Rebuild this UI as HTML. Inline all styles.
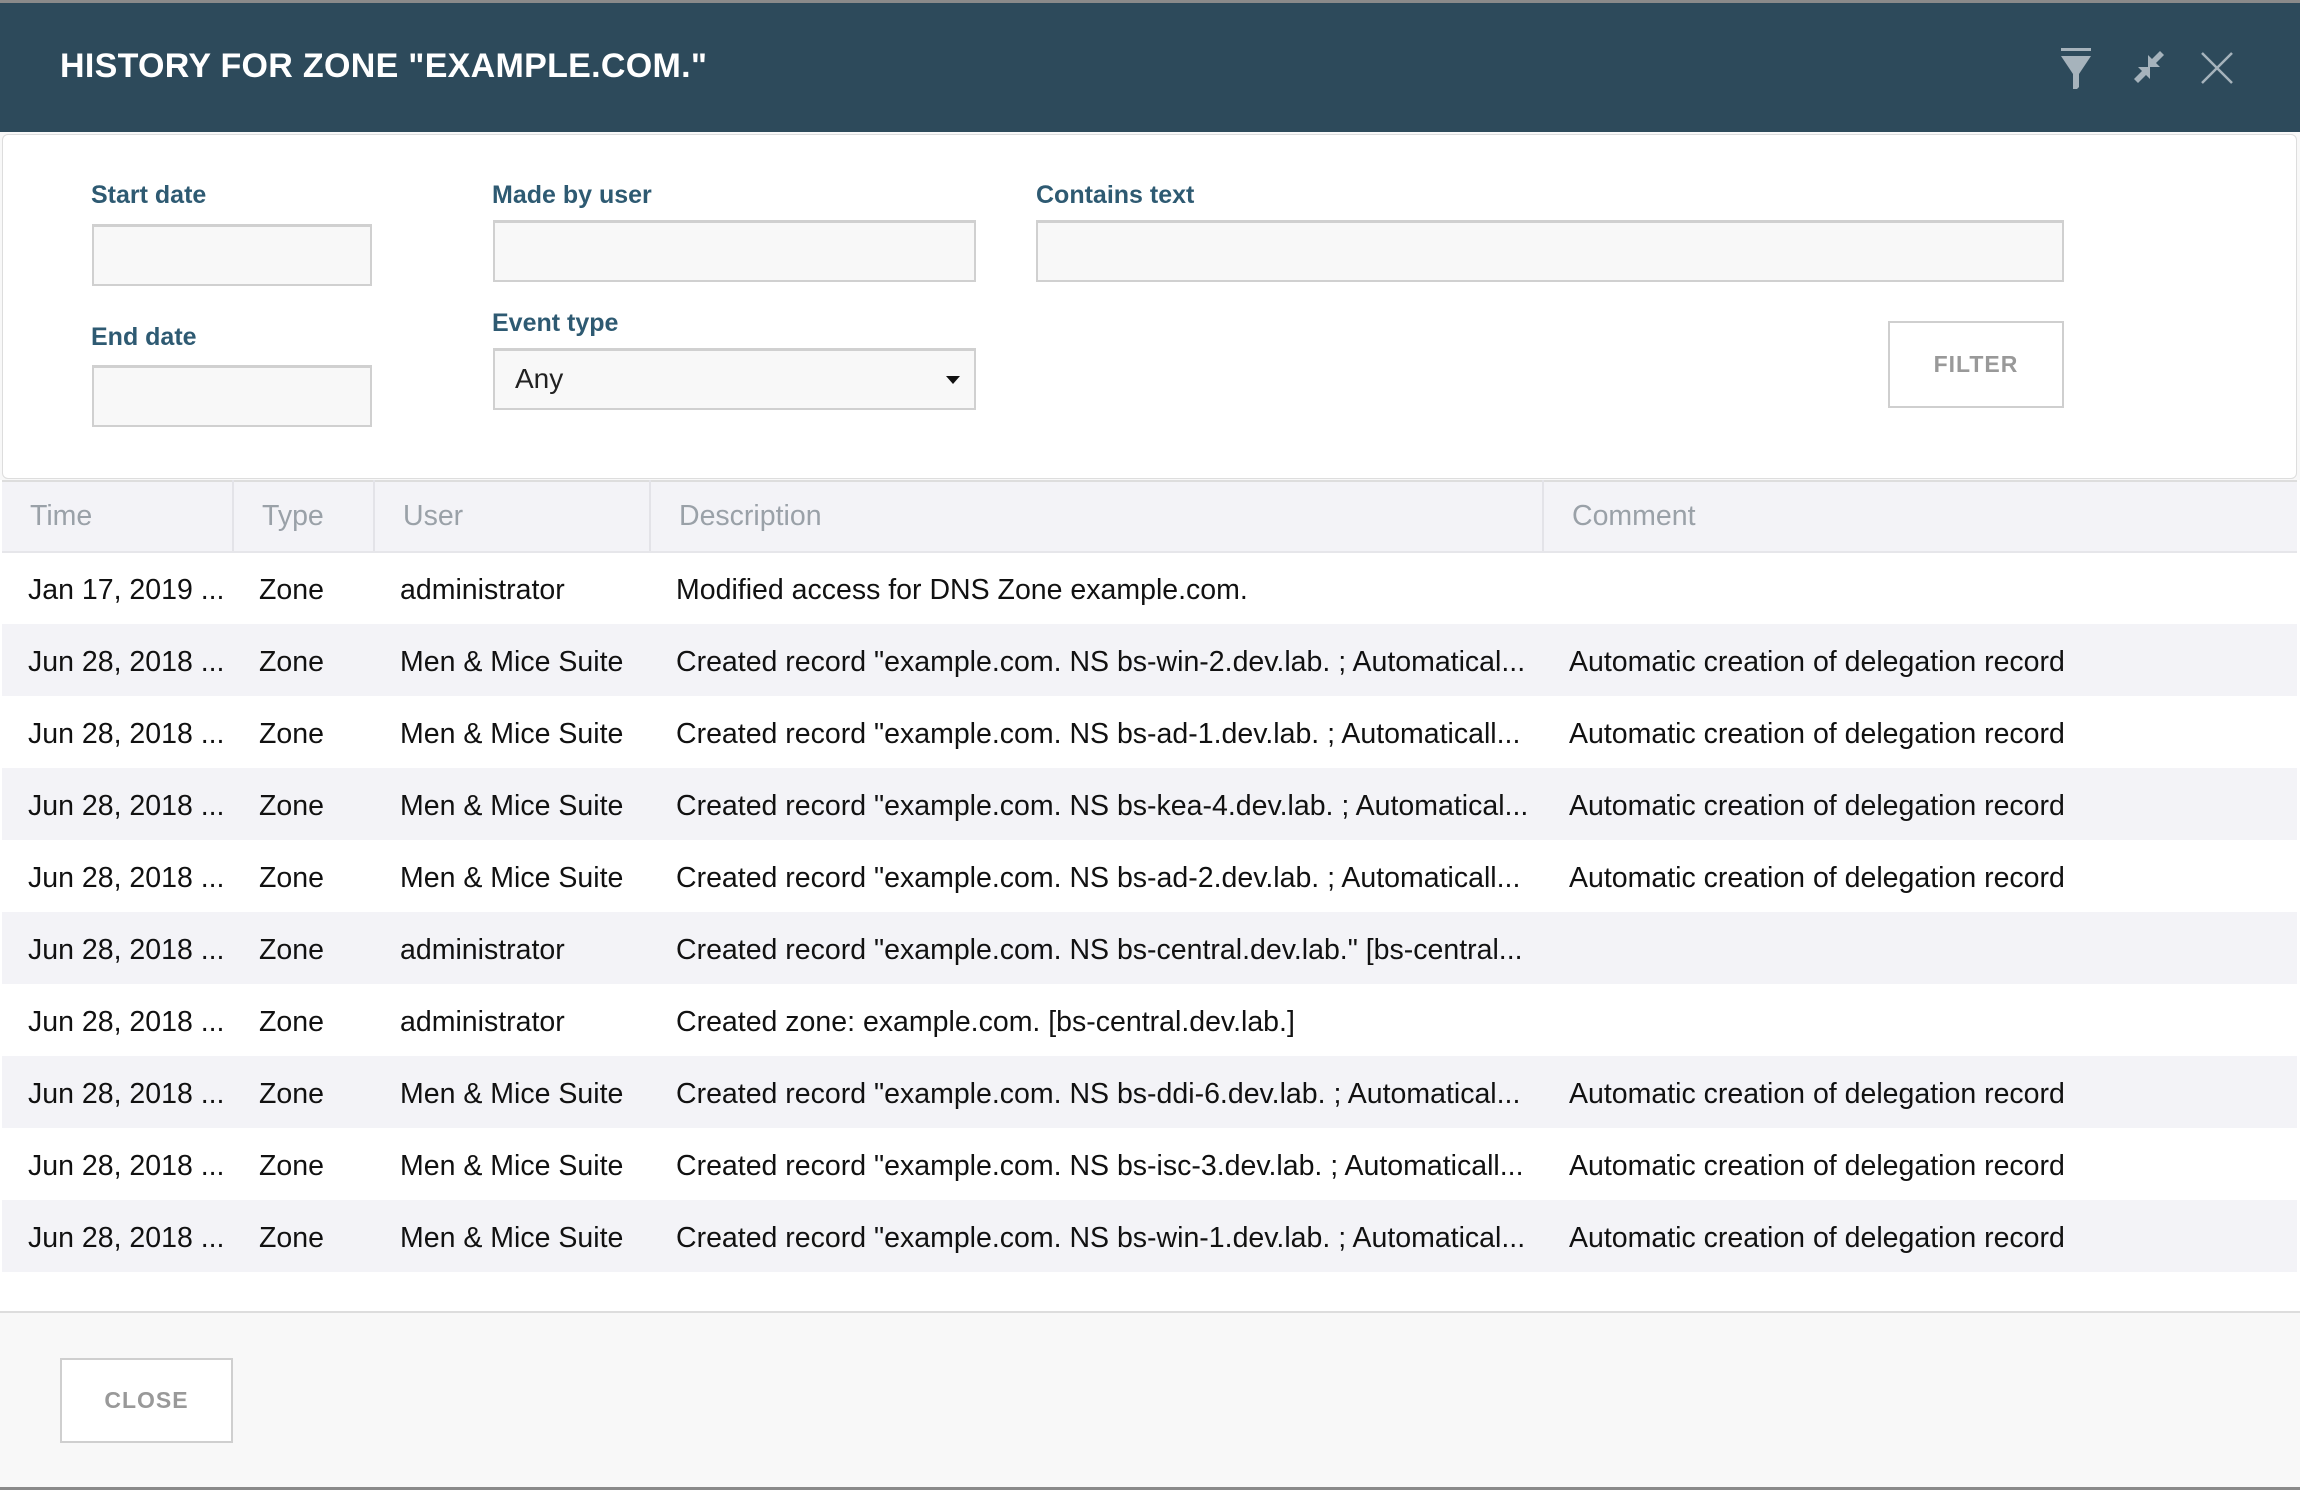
<!DOCTYPE html>
<html><head><meta charset="utf-8"><style>
*{box-sizing:border-box;margin:0;padding:0}
body{width:2300px;height:1490px;overflow:hidden;background:#f8f8f8;font-family:"Liberation Sans",Arial,sans-serif;position:relative}
.top{position:absolute;left:0;top:0;width:2300px;height:3px;background:#8a8a8a}
.hdr{position:absolute;left:0;top:3px;width:2300px;height:129px;background:#2d4a5b}
.title{position:absolute;left:60px;top:44px;color:#fff;font-size:34px;font-weight:bold;letter-spacing:0.3px}
.panel{position:absolute;left:2px;top:134px;width:2295px;height:345px;background:#fff;border:1px solid #ddd;border-radius:6px}
.lbl{position:absolute;color:#2e5a72;font-size:25px;font-weight:bold}
.inp{position:absolute;background:#f8f8f8;border:2px solid #d0d0d0;border-top-width:3px}
.btn{position:absolute;background:#fff;border:2px solid #cfcfcf;color:#999;font-size:23px;font-weight:bold;display:flex;align-items:center;justify-content:center;letter-spacing:1px}
table{position:absolute;left:2px;top:480px;width:2295px;border-collapse:collapse;font-size:28.5px;background:#fff}
th{height:71px;background:#f3f3f7;color:#9aa1a8;font-weight:normal;text-align:left;padding-left:28px;border-right:2px solid #e3e3e8;border-top:2px solid #ddd;border-bottom:2px solid #e6e6ea}
td{height:72px;padding-left:26px;padding-top:4px;color:#111;white-space:nowrap}
tr:nth-child(odd) td{background:#f3f3f7}
.tblwrap{position:absolute;left:0;top:480px;width:2300px;height:833px;background:#fff;border-bottom:2px solid #ddd}
</style></head><body>
<div class="top"></div>
<div class="hdr">
<div class="title">HISTORY FOR ZONE "EXAMPLE.COM."</div>
<svg style="position:absolute;left:2058px;top:44px" width="36" height="42" viewBox="0 0 36 42"><rect x="3" y="1" width="30" height="3" fill="#a6b3bc"/><path d="M3 9 H33 L21 27 V40 L15 46 V27 Z" fill="#a6b3bc"/></svg>
<svg style="position:absolute;left:2130px;top:45px" width="38" height="38" viewBox="0 0 38 38"><path d="M30 3 L34 7 L26 15 L30 19 H18 V7 L22 11 Z" fill="#a6b3bc"/><path d="M8 35 L4 31 L12 23 L8 19 H20 V31 L16 27 Z" fill="#a6b3bc"/></svg>
<svg style="position:absolute;left:2200px;top:48px" width="34" height="34" viewBox="0 0 34 34"><path d="M2 2 L32 32 M32 2 L2 32" stroke="#a6b3bc" stroke-width="2.5"/></svg>
</div>
<div class="panel"></div>
<div class="lbl" style="left:91px;top:181px">Start date</div>
<div class="inp" style="left:92px;top:224px;width:280px;height:62px"></div>
<div class="lbl" style="left:91px;top:323px">End date</div>
<div class="inp" style="left:92px;top:365px;width:280px;height:62px"></div>
<div class="lbl" style="left:492px;top:181px">Made by user</div>
<div class="inp" style="left:493px;top:220px;width:483px;height:62px"></div>
<div class="lbl" style="left:492px;top:309px">Event type</div>
<div class="inp" style="left:493px;top:348px;width:483px;height:62px;font-size:28px;color:#222;padding:12px 0 0 20px">Any<span style="position:absolute;right:14px;top:25px;width:0;height:0;border-left:7px solid transparent;border-right:7px solid transparent;border-top:8px solid #111"></span></div>
<div class="lbl" style="left:1036px;top:181px">Contains text</div>
<div class="inp" style="left:1036px;top:220px;width:1028px;height:62px"></div>
<div class="btn" style="left:1888px;top:321px;width:176px;height:87px">FILTER</div>
<div class="tblwrap"></div>
<table>
<colgroup><col style="width:231px"><col style="width:141px"><col style="width:276px"><col style="width:893px"><col></colgroup>
<tr><th>Time</th><th>Type</th><th>User</th><th>Description</th><th style="border-right:none">Comment</th></tr>
<tr><td>Jan 17, 2019 ...</td><td>Zone</td><td>administrator</td><td>Modified access for DNS Zone example.com.</td><td></td></tr>
<tr><td>Jun 28, 2018 ...</td><td>Zone</td><td>Men &amp; Mice Suite</td><td>Created record "example.com. NS bs-win-2.dev.lab. ; Automatical...</td><td>Automatic creation of delegation record</td></tr>
<tr><td>Jun 28, 2018 ...</td><td>Zone</td><td>Men &amp; Mice Suite</td><td>Created record "example.com. NS bs-ad-1.dev.lab. ; Automaticall...</td><td>Automatic creation of delegation record</td></tr>
<tr><td>Jun 28, 2018 ...</td><td>Zone</td><td>Men &amp; Mice Suite</td><td>Created record "example.com. NS bs-kea-4.dev.lab. ; Automatical...</td><td>Automatic creation of delegation record</td></tr>
<tr><td>Jun 28, 2018 ...</td><td>Zone</td><td>Men &amp; Mice Suite</td><td>Created record "example.com. NS bs-ad-2.dev.lab. ; Automaticall...</td><td>Automatic creation of delegation record</td></tr>
<tr><td>Jun 28, 2018 ...</td><td>Zone</td><td>administrator</td><td>Created record "example.com. NS bs-central.dev.lab." [bs-central...</td><td></td></tr>
<tr><td>Jun 28, 2018 ...</td><td>Zone</td><td>administrator</td><td>Created zone: example.com. [bs-central.dev.lab.]</td><td></td></tr>
<tr><td>Jun 28, 2018 ...</td><td>Zone</td><td>Men &amp; Mice Suite</td><td>Created record "example.com. NS bs-ddi-6.dev.lab. ; Automatical...</td><td>Automatic creation of delegation record</td></tr>
<tr><td>Jun 28, 2018 ...</td><td>Zone</td><td>Men &amp; Mice Suite</td><td>Created record "example.com. NS bs-isc-3.dev.lab. ; Automaticall...</td><td>Automatic creation of delegation record</td></tr>
<tr><td>Jun 28, 2018 ...</td><td>Zone</td><td>Men &amp; Mice Suite</td><td>Created record "example.com. NS bs-win-1.dev.lab. ; Automatical...</td><td>Automatic creation of delegation record</td></tr>
</table>
<div class="btn" style="left:60px;top:1358px;width:173px;height:85px">CLOSE</div>
<div style="position:absolute;left:0;top:1487px;width:2300px;height:3px;background:#8a8a8a"></div>
</body></html>
